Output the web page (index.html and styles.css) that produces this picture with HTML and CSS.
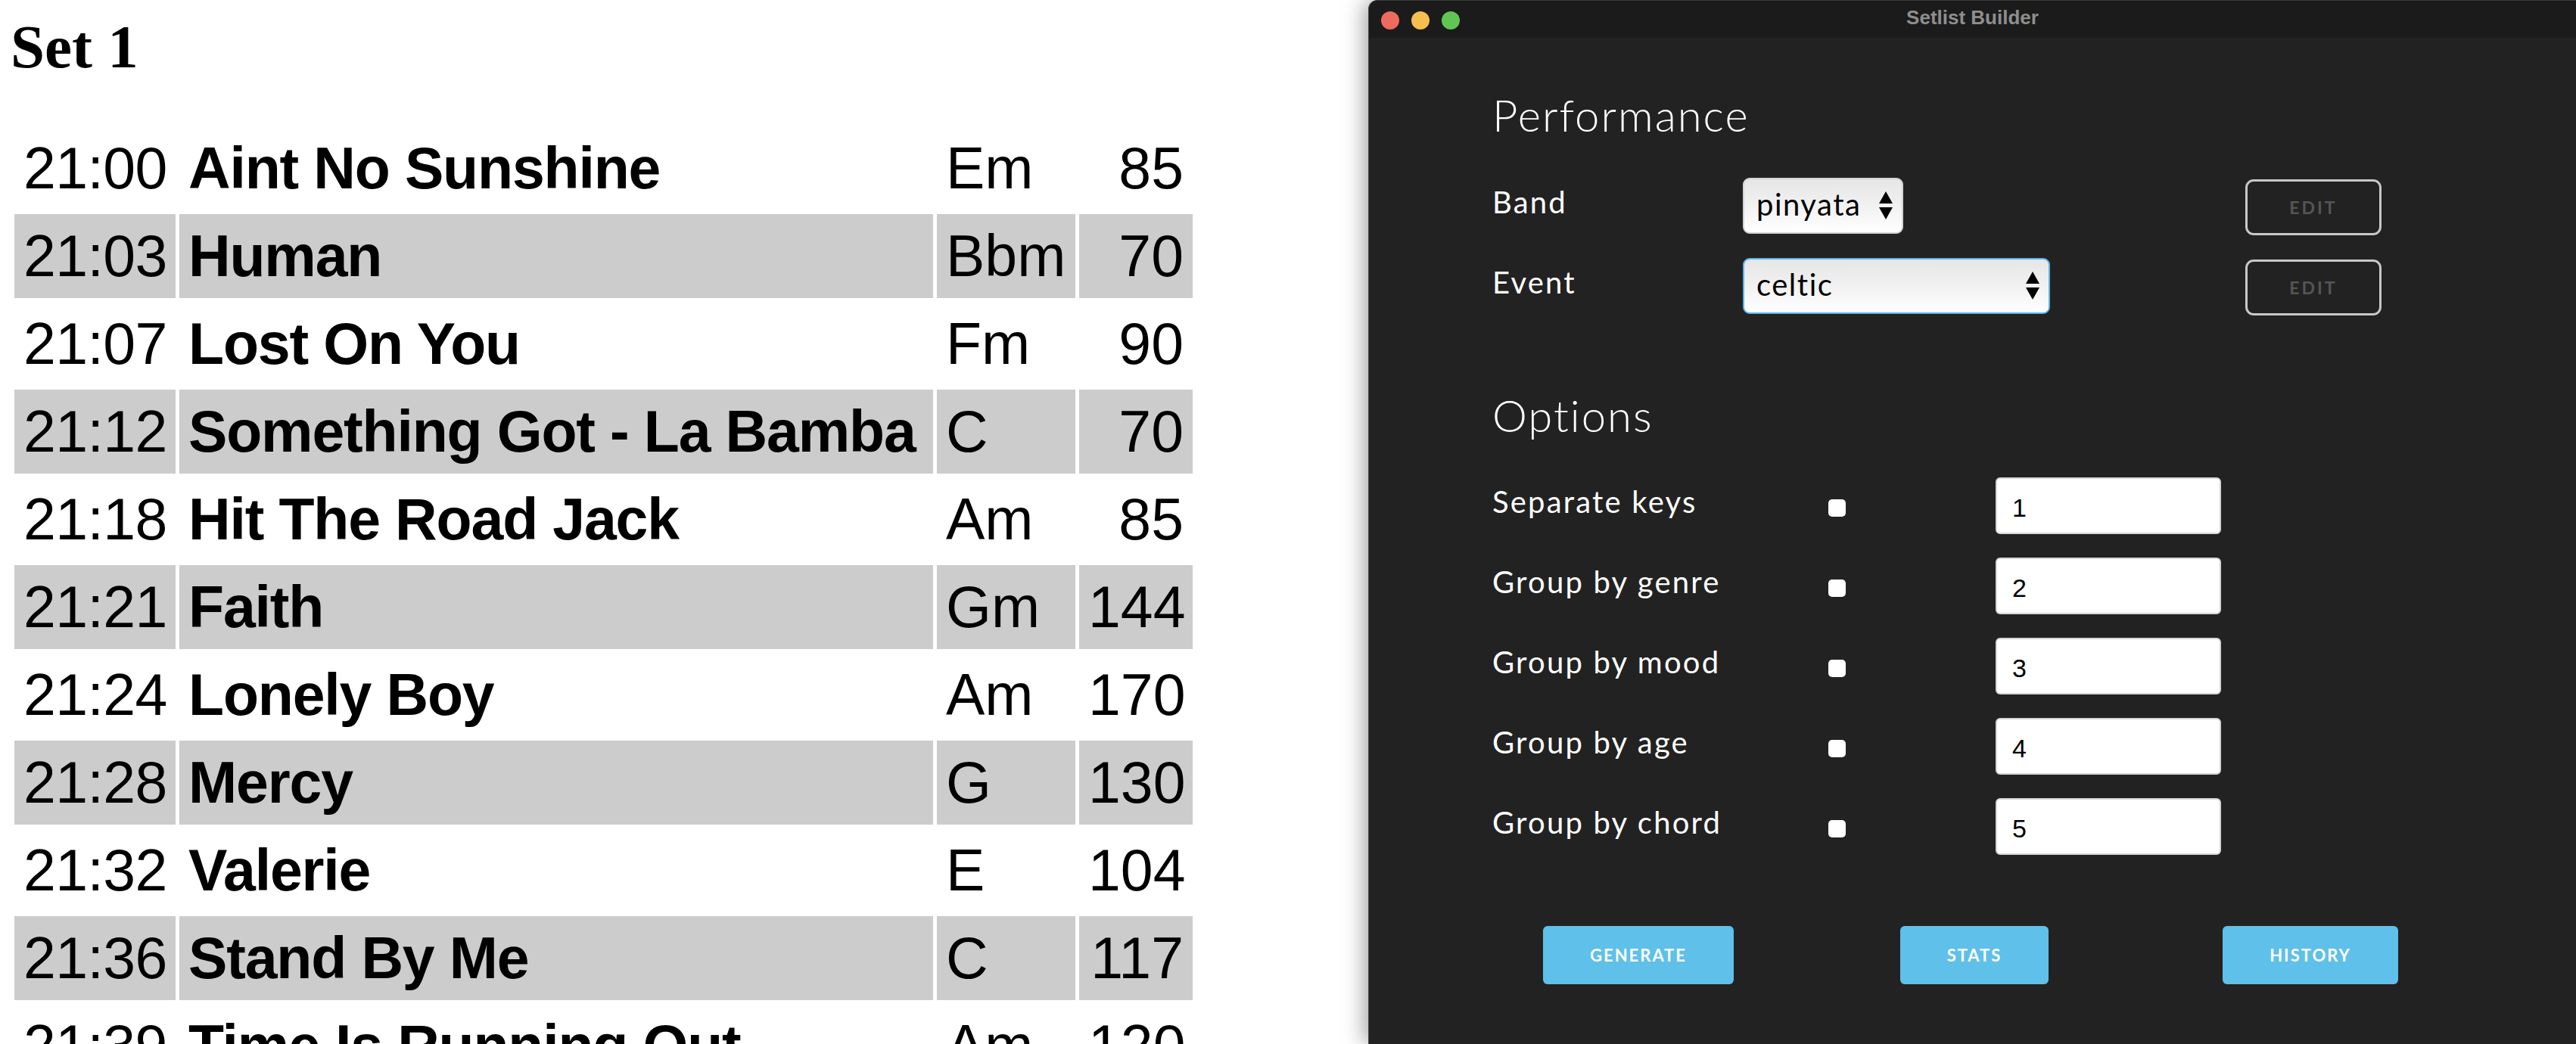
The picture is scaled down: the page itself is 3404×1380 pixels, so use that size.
FILE: index.html
```html
<!DOCTYPE html>
<html lang="en">
<head>
<meta charset="utf-8">
<title>Set 1 — Setlist Builder</title>
<link rel="stylesheet" href="styles.css">
</head>
<body>
<div class="desktop">
  <main class="page">
    <h1 class="set-title">Set 1</h1>
    <table class="setlist">
      <colgroup>
        <col class="c-time"><col class="c-title"><col class="c-key"><col class="c-bpm">
      </colgroup>
      <tbody>
        <tr><td class="time">21:00</td><td class="song">Aint No Sunshine</td><td class="key">Em</td><td class="bpm">85</td></tr>
        <tr><td class="time">21:03</td><td class="song">Human</td><td class="key">Bbm</td><td class="bpm">70</td></tr>
        <tr><td class="time">21:07</td><td class="song">Lost On You</td><td class="key">Fm</td><td class="bpm">90</td></tr>
        <tr><td class="time">21:12</td><td class="song">Something Got - La Bamba</td><td class="key">C</td><td class="bpm">70</td></tr>
        <tr><td class="time">21:18</td><td class="song">Hit The Road Jack</td><td class="key">Am</td><td class="bpm">85</td></tr>
        <tr><td class="time">21:21</td><td class="song">Faith</td><td class="key">Gm</td><td class="bpm">144</td></tr>
        <tr><td class="time">21:24</td><td class="song">Lonely Boy</td><td class="key">Am</td><td class="bpm">170</td></tr>
        <tr><td class="time">21:28</td><td class="song">Mercy</td><td class="key">G</td><td class="bpm">130</td></tr>
        <tr><td class="time">21:32</td><td class="song">Valerie</td><td class="key">E</td><td class="bpm">104</td></tr>
        <tr><td class="time">21:36</td><td class="song">Stand By Me</td><td class="key">C</td><td class="bpm">117</td></tr>
        <tr><td class="time">21:39</td><td class="song">Time Is Running Out</td><td class="key">Am</td><td class="bpm">120</td></tr>
      </tbody>
    </table>
  </main>

  <section class="window">
    <header class="titlebar">
      <div class="lights">
        <span class="light red"></span>
        <span class="light yellow"></span>
        <span class="light green"></span>
      </div>
      <div class="win-title">Setlist Builder</div>
      <div class="spacer"></div>
    </header>

    <div class="win-body">
      <h2 class="section-title">Performance</h2>
      <div class="perf-grid">
        <div class="label">Band</div>
        <div class="select select-band">
          <span class="select-value">pinyata</span>
          <svg class="arrows" viewBox="0 0 18 37" width="18" height="37"><path d="M0 16 L9 0 L18 16 Z M0 21 L18 21 L9 37 Z" fill="#000"/></svg>
        </div>
        <div class="edit-btn">EDIT</div>

        <div class="label">Event</div>
        <div class="select select-event focused">
          <span class="select-value">celtic</span>
          <svg class="arrows" viewBox="0 0 18 37" width="18" height="37"><path d="M0 16 L9 0 L18 16 Z M0 21 L18 21 L9 37 Z" fill="#000"/></svg>
        </div>
        <div class="edit-btn">EDIT</div>
      </div>

      <h2 class="section-title options-title">Options</h2>
      <div class="opt-grid">
        <div class="label">Separate keys</div><span class="check"></span><div class="num">1</div>
        <div class="label">Group by genre</div><span class="check"></span><div class="num">2</div>
        <div class="label">Group by mood</div><span class="check"></span><div class="num">3</div>
        <div class="label">Group by age</div><span class="check"></span><div class="num">4</div>
        <div class="label">Group by chord</div><span class="check"></span><div class="num">5</div>
      </div>

      <div class="actions">
        <div class="cell"><div class="btn">GENERATE</div></div>
        <div class="cell"><div class="btn">STATS</div></div>
        <div class="cell"><div class="btn">HISTORY</div></div>
      </div>
    </div>
  </section>
</div>
</body>
</html>
```

FILE: styles.css
```css
html, body {
  margin: 0;
  padding: 0;
  background: #ffffff;
}

.desktop {
  display: flex;
  width: 3404px;
  height: 1380px;
  overflow: hidden;
}

/* ---------- left page ---------- */
.page {
  flex: 0 0 1808px;
  padding: 0 0 0 14px;
  box-sizing: border-box;
  background: #fff;
}

.set-title {
  font-family: "Liberation Serif", "Times New Roman", serif;
  font-weight: 700;
  font-size: 81px;
  line-height: 84px;
  margin: 20px 0 58px 0;
}

.setlist {
  table-layout: fixed;
  border-collapse: separate;
  border-spacing: 5px;
  width: 1567px;
  font-family: "Liberation Sans", Arial, sans-serif;
  font-size: 77px;
  line-height: 87px;
  color: #000;
}

.c-time { width: 213px; }
.c-title { width: 996px; }
.c-key { width: 183px; }
.c-bpm { width: 150px; }

.setlist td {
  padding: 12px;
  white-space: nowrap;
  overflow: hidden;
}

.setlist tr:nth-child(even) td {
  background: #cccccc;
}

.setlist .time { letter-spacing: -0.6px; }
.setlist .song { font-weight: 700; letter-spacing: -1.15px; }
.setlist .bpm { text-align: right; }

/* ---------- app window ---------- */
.window {
  flex: 1 1 auto;
  background: #222222;
  border-top-left-radius: 12px;
  border-left: 1px solid #4a4a4a;
  border-top: 1px solid #3a3a3a;
  box-shadow: -6px 0 28px rgba(0, 0, 0, 0.35);
  display: flex;
  flex-direction: column;
  font-family: "Lato", "Open Sans", sans-serif;
  color: #ffffff;
  position: relative;
  z-index: 1;
}

.titlebar {
  height: 49px;
  background: #1b1b1b;
  display: grid;
  grid-template-columns: 1fr auto 1fr;
  align-items: center;
  border-top-left-radius: 12px;
}

.lights {
  display: flex;
  gap: 16px;
  padding-left: 16px;
  padding-top: 2px;
}

.light {
  width: 24px;
  height: 24px;
  border-radius: 50%;
  display: block;
}
.light.red { background: #ee6a5f; }
.light.yellow { background: #f5be4f; }
.light.green { background: #61c554; }

.win-title {
  font-family: "Liberation Sans", Arial, sans-serif;
  font-weight: 700;
  font-size: 26px;
  color: #8e8e8e;
  padding-bottom: 5px;
}

.win-body {
  padding: 67px 0 0 163px;
}

.section-title {
  font-family: "Lato", sans-serif;
  font-weight: 300;
  font-size: 58px;
  line-height: 1.2;
  letter-spacing: 2px;
  margin: 0 0 48px 0;
  color: #ffffff;
}

.options-title {
  margin-top: 99px;
}

.label {
  font-size: 40px;
  line-height: 1.2;
  font-weight: 400;
  letter-spacing: 2.2px;
  padding-top: 8px;
  white-space: nowrap;
}

.perf-grid {
  display: grid;
  grid-template-columns: 331px 664px 180px;
  grid-auto-rows: 74px;
  row-gap: 32px;
  align-items: start;
}

.select {
  height: 74px;
  box-sizing: border-box;
  border: 2px solid #d4d4d4;
  border-radius: 9px;
  background: linear-gradient(#e6e6e6 0%, #f1f1f1 50%, #ffffff 100%);
  display: flex;
  align-items: center;
  justify-content: space-between;
  padding: 0 12px 0 16px;
  color: #000;
  font-size: 40px;
  letter-spacing: 1.5px;
}
.select-band { width: 212px; }
.select-event { width: 406px; }
.select.focused {
  border-color: #5cb3e2;
}
.select-value {
  padding-bottom: 4px;
}
.arrows { display: block; }

.edit-btn {
  width: 180px;
  height: 74px;
  box-sizing: border-box;
  border: 3px solid #c8c8c8;
  border-radius: 11px;
  display: flex;
  align-items: center;
  justify-content: center;
  font-size: 23px;
  font-weight: 700;
  letter-spacing: 3px;
  color: #555555;
  margin-top: 2px;
}

.opt-grid {
  display: grid;
  grid-template-columns: 444px 221px 298px;
  grid-auto-rows: 75px;
  row-gap: 31px;
  align-items: start;
}

.check {
  width: 23px;
  height: 23px;
  background: #ffffff;
  border-radius: 5px;
  margin-top: 29px;
  display: block;
}

.num {
  height: 75px;
  box-sizing: border-box;
  background: #ffffff;
  border: 2px solid #d6d6d6;
  border-radius: 6px;
  font-family: "Liberation Sans", Arial, sans-serif;
  font-size: 34px;
  color: #000;
  display: flex;
  align-items: center;
  padding: 6px 0 0 20px;
}

.actions {
  display: grid;
  grid-template-columns: repeat(3, 444px);
  margin: 94px 0 0 -29px;
  justify-items: center;
}

.btn {
  height: 77px;
  box-sizing: border-box;
  padding: 0 62px;
  background: #5fc0e9;
  border-radius: 6px;
  display: flex;
  align-items: center;
  font-size: 22px;
  font-weight: 700;
  letter-spacing: 2px;
  color: #ffffff;
}
```
